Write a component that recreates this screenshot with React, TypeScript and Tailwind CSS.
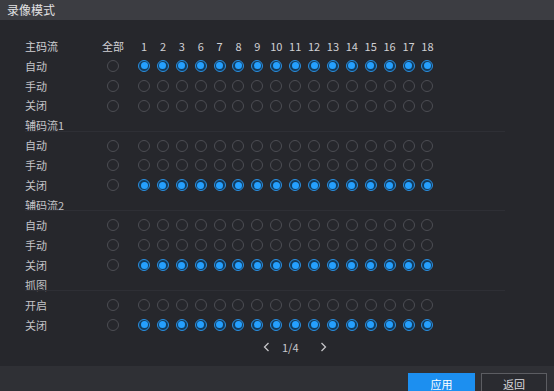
import React from 'react';

const CHANNELS = ['1', '2', '3', '6', '7', '8', '9', '10', '11', '12', '13', '14', '15', '16', '17', '18'];

type Row =
  | { kind: 'head'; label: string; line?: boolean }
  | { kind: 'radio'; label: string; on: boolean };

const ROWS: Row[] = [
  { kind: 'radio', label: '自动', on: true },
  { kind: 'radio', label: '手动', on: false },
  { kind: 'radio', label: '关闭', on: false },
  { kind: 'head', label: '辅码流1', line: true },
  { kind: 'radio', label: '自动', on: false },
  { kind: 'radio', label: '手动', on: false },
  { kind: 'radio', label: '关闭', on: true },
  { kind: 'head', label: '辅码流2', line: true },
  { kind: 'radio', label: '自动', on: false },
  { kind: 'radio', label: '手动', on: false },
  { kind: 'radio', label: '关闭', on: true },
  { kind: 'head', label: '抓图', line: true },
  { kind: 'radio', label: '开启', on: false },
  { kind: 'radio', label: '关闭', on: true },
];

const Radio: React.FC<{ on: boolean }> = ({ on }) =>
  on ? (
    <span className="w-[12px] h-[12px] rounded-full border border-[#2a8fe0] bg-[#133c5e] flex items-center justify-center">
      <span className="w-[7px] h-[7px] rounded-full bg-[#25a0ff]" />
    </span>
  ) : (
    <span className="w-[12px] h-[12px] rounded-full border border-[#4c4d53]" />
  );

const Chevron: React.FC<{ dir: 'left' | 'right' }> = ({ dir }) => (
  <svg width="7" height="10" viewBox="0 0 7 10" fill="none" stroke="#c4c4c8" strokeWidth="1.3">
    {dir === 'left' ? <path d="M5.5 1 L1.5 5 L5.5 9" /> : <path d="M1.5 1 L5.5 5 L1.5 9" />}
  </svg>
);

const App: React.FC = () => {
  return (
    <div
      className="w-[554px] h-[391px] overflow-hidden flex flex-col bg-[#26272c] text-[#c4c4c8]"
      style={{ fontFamily: '"Noto Sans CJK SC", "Noto Sans", sans-serif' }}
    >
      <header className="h-[20px] shrink-0 bg-[#3c3d42] flex items-center pl-[7px] text-[12px] text-[#e2e2e4]">
        录像模式
      </header>

      <main className="h-[346px] shrink-0 pt-[16px] pl-[25px]">
        {/* column header */}
        <div className="flex items-center h-[19.93px] text-[11px] text-[#d0d0d4]">
          <span className="w-[74px]">主码流</span>
          <span className="w-[28px] text-center">全部</span>
          <span className="w-[7.6px]" />
          {CHANNELS.map(c => (
            <span key={c} className="w-[18.9px] text-center">{c}</span>
          ))}
        </div>

        {ROWS.map((row, i) =>
          row.kind === 'head' ? (
            <div key={i} className="relative flex items-center h-[19.93px] text-[11px]">
              <span>{row.label}</span>
              {row.line && <span className="absolute left-0 w-[480px] top-[15px] h-px bg-[#2e2f35]" />}
            </div>
          ) : (
            <div key={i} className="flex items-center h-[19.93px] text-[11px]">
              <span className="w-[74px]">{row.label}</span>
              <span className="w-[28px] flex justify-center">
                <Radio on={false} />
              </span>
              <span className="w-[7.6px]" />
              {CHANNELS.map(c => (
                <span key={c} className="w-[18.9px] flex justify-center">
                  <Radio on={row.on} />
                </span>
              ))}
            </div>
          )
        )}

        <div className="flex items-center h-[20px] mt-[2px] pl-[238px] text-[11px] text-[#c8c8cc]">
          <Chevron dir="left" />
          <span className="ml-[12px]">1/4</span>
          <span className="ml-[21px]"><Chevron dir="right" /></span>
        </div>
      </main>

      <footer className="flex-1 bg-[#2f3035] flex justify-end items-start pt-[7px] pr-[7px] gap-[6px]">
        <button className="w-[67px] h-[22px] bg-[#1c8ff0] text-white text-[11px] flex items-center justify-center">
          应用
        </button>
        <button className="w-[66px] h-[22px] border border-[#5c5d62] bg-[#2a2b30] text-[#d8d8dc] text-[11px] flex items-center justify-center">
          返回
        </button>
      </footer>
    </div>
  );
};

export default App;
